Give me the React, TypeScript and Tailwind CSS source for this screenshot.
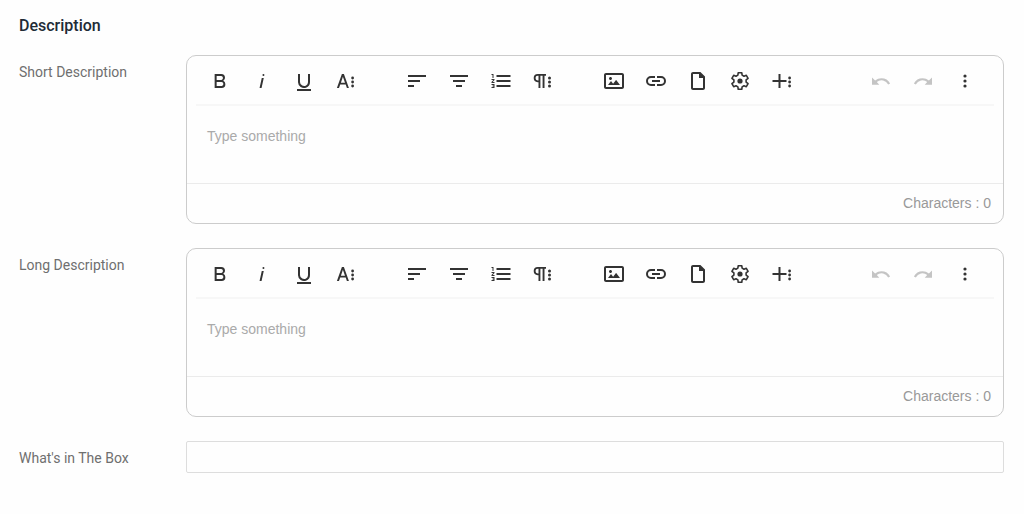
import React from "react";

type IconName =
  | "bold" | "italic" | "underline" | "moreText"
  | "alignLeft" | "alignCenter" | "orderedList" | "moreParagraph"
  | "image" | "link" | "file" | "settings" | "moreRich"
  | "undo" | "redo" | "moreMisc";

const gear = (() => {
  const points: string[] = [];
  const teeth = 6;
  for (let i = 0; i < teeth; i++) {
    const base = (i * 360) / teeth - 90;
    [[-20, 6.2], [-12, 8.5], [12, 8.5], [20, 6.2]].forEach(([da, r]) => {
      const a = ((base + da) * Math.PI) / 180;
      points.push(`${(12 + r * Math.cos(a)).toFixed(2)},${(12 + r * Math.sin(a)).toFixed(2)}`);
    });
  }
  return points.join(" ");
})();

const icons: Record<IconName, React.ReactNode> = {
  bold: <path d="M15.25,11.8h0A3.68,3.68,0,0,0,17,9a3.93,3.93,0,0,0-3.86-4H6.65V19h7a3.74,3.74,0,0,0,3.7-3.78V15.1A3.64,3.64,0,0,0,15.25,11.8ZM8.65,7h4.2a2.09,2.09,0,0,1,2,1.3,2.09,2.09,0,0,1-1.37,2.61,2.23,2.23,0,0,1-.63.09H8.65Zm4.6,10H8.65V13h4.6a2.09,2.09,0,0,1,2,1.3,2.09,2.09,0,0,1-1.37,2.61A2.23,2.23,0,0,1,13.25,17Z" />,
  italic: <path d="M11.76,9h2l-2.2,10h-2Zm1.68-4a1,1,0,1,0,1,1,1,1,0,0,0-1-1Z" />,
  underline: <path d="M19,20v2H5V20Zm-3-6.785a4,4,0,0,1-5.74,3.4A3.75,3.75,0,0,1,8,13.085V5.005H6v8.21a6,6,0,0,0,8,5.44,5.851,5.851,0,0,0,4-5.65v-8H16Z" />,
  moreText: (
    <>
      <path d="M12.9,19h2L9.9,5h-2L2.9,19H5l1.2-3.4h5.5ZM6.9,13.8,8.9,7.67l2.1,6.13Z" />
      <circle cx="18.6" cy="9" r="1.4" /><circle cx="18.6" cy="13" r="1.4" /><circle cx="18.6" cy="17" r="1.4" />
    </>
  ),
  alignLeft: <path d="M3,18h6v-2H3V18z M3,11v2h12v-2H3z M3,6v2h18V6H3z" />,
  alignCenter: <path d="M9,18h6v-2H9V18z M6,11v2h12v-2H6z M3,6v2h18V6H3z" />,
  orderedList: (
    <path d="M2.5,16h2v.5h-1v1h1V18h-2v1h3V15h-3Zm1-7h1V5h-2V6h1Zm-1,2H4.3L2.5,13.1V14h3V13H3.7l1.8-2.1V10h-3Zm5-5V8h14V6Zm0,12h14V16H7.5Zm0-5h14V11H7.5Z" />
  ),
  moreParagraph: (
    <>
      <path d="M6.8,5H15V6.8H13.5V19H11.6V6.8H9.4V19H7.5V13.2H6.8A4.1,4.1,0,0,1,6.8,5ZM7.5,6.8H6.8a2.3,2.3,0,0,0,0,4.6H7.5Z" />
      <circle cx="18.5" cy="9" r="1.5" /><circle cx="18.5" cy="13" r="1.5" /><circle cx="18.5" cy="17" r="1.5" />
    </>
  ),
  image: (
    <path d="M14.2,11l3.8,5H6l3-3.9l2.1,2.7L14,11H14.2z M8.5,11c0.8,0,1.5-0.7,1.5-1.5S9.3,8,8.5,8S7,8.7,7,9.5C7,10.3,7.7,11,8.5,11z M22,6v12c0,1.1-0.9,2-2,2H4c-1.1,0-2-0.9-2-2V6c0-1.1,0.9-2,2-2h16C21.1,4,22,4.9,22,6z M20,8.8V6H4v12h16V8.8z" />
  ),
  link: (
    <path d="M11,17H7A5,5,0,0,1,7,7h4V9H7a3,3,0,0,0,0,6h4ZM17,7H13V9h4a3,3,0,0,1,0,6H13v2h4A5,5,0,0,0,17,7Zm-1,4H8v2h8Z" />
  ),
  file: (
    <path d="M7,3C5.9,3,5,3.9,5,5v14c0,1.1,0.9,2,2,2h10c1.1,0,2-0.9,2-2V7.6L14.4,3H7z M17,19H7V5h6v4h4V19z" />
  ),
  settings: (
    <>
      <polygon points={gear} fill="none" stroke="currentColor" strokeWidth="1.6" strokeLinejoin="round" />
      <circle cx="12" cy="12" r="2.6" />
    </>
  ),
  moreRich: (
    <>
      <path d="M16.5,13H10.5v6h-2V13h-6V11h6V5h2v6h6Z" />
      <circle cx="19.6" cy="9" r="1.4" /><circle cx="19.6" cy="13" r="1.4" /><circle cx="19.6" cy="17" r="1.4" />
    </>
  ),
  undo: (
    <path d="M12.4,9.2a10,10,0,0,0-6.3,2.3L3,8.4V15.7h7.3L7.8,13.1a7.4,7.4,0,0,1,11.4,2.5l1.9-1A9.8,9.8,0,0,0,12.4,9.2Z" />
  ),
  redo: (
    <path d="M11.6,9.2a10,10,0,0,1,6.3,2.3L21,8.4V15.7H13.7L16.2,13.1a7.4,7.4,0,0,0-11.4,2.5l-1.9-1A9.8,9.8,0,0,1,11.6,9.2Z" />
  ),
  moreMisc: (
    <>
      <circle cx="12" cy="7" r="1.6" /><circle cx="12" cy="12" r="1.6" /><circle cx="12" cy="17" r="1.6" />
    </>
  ),
};

type Tool = { icon: IconName; label: string; disabled?: boolean };

const groups: Tool[][] = [
  [
    { icon: "bold", label: "Bold" },
    { icon: "italic", label: "Italic" },
    { icon: "underline", label: "Underline" },
    { icon: "moreText", label: "More Text" },
  ],
  [
    { icon: "alignLeft", label: "Align Left" },
    { icon: "alignCenter", label: "Align Center" },
    { icon: "orderedList", label: "Ordered List" },
    { icon: "moreParagraph", label: "More Paragraph" },
  ],
  [
    { icon: "image", label: "Insert Image" },
    { icon: "link", label: "Insert Link" },
    { icon: "file", label: "Upload File" },
    { icon: "settings", label: "Settings" },
    { icon: "moreRich", label: "More Rich" },
  ],
];

const history: Tool[] = [
  { icon: "undo", label: "Undo", disabled: true },
  { icon: "redo", label: "Redo", disabled: true },
  { icon: "moreMisc", label: "More Misc" },
];

function ToolGroup({ tools }: { tools: Tool[] }) {
  return (
    <div className="flex gap-1">
      {tools.map(({ icon, label, disabled }) => (
        <button
          key={icon}
          type="button"
          aria-label={label}
          disabled={disabled}
          className="flex h-10 w-[38px] items-center justify-center rounded text-[#333333] hover:bg-gray-100 disabled:text-[#c4c4c4]"
        >
          <svg viewBox="0 0 24 24" className="size-6" fill="currentColor" aria-hidden="true">
            {icons[icon]}
          </svg>
        </button>
      ))}
    </div>
  );
}

function Editor({ id }: { id: string }) {
  const [text, setText] = React.useState("");
  return (
    <div className="min-w-0 flex-1 rounded-[10px] border border-[#cccccc] font-['Liberation_Sans',Arial,sans-serif]">
      <div className="mx-[9px] flex items-center justify-between border-b-2 border-[#f7f7f7] pt-[5px] pr-[10px] pb-[3px] pl-[5px]">
        <div className="flex gap-[33px]">
          {groups.map((tools) => (
            <ToolGroup key={tools[0].icon} tools={tools} />
          ))}
        </div>
        <ToolGroup tools={history} />
      </div>
      <textarea
        id={id}
        value={text}
        onChange={(e) => setText(e.target.value)}
        placeholder="Type something"
        className="block h-[77px] w-full resize-none bg-transparent px-5 pt-5 text-sm leading-5 text-[#414141] outline-none placeholder:text-[#aaaaaa]"
      />
      <div className="border-t border-[#ebebeb] px-3 pt-[9px] pb-[10px] text-right text-sm leading-5 text-[#999999]">
        Characters : {text.length}
      </div>
    </div>
  );
}

function Field({ id, label, children }: { id: string; label: string; children: React.ReactNode }) {
  return (
    <div className="flex items-start">
      <label htmlFor={id} className="w-[167px] shrink-0 pt-[7px] text-sm leading-5 text-[#6f6f6f]">
        {label}
      </label>
      {children}
    </div>
  );
}

export default function App() {
  return (
    <main className="min-h-screen bg-[#fefefe] py-4 pr-5 pl-[19px] font-[Roboto,sans-serif]">
      <h2 className="text-base leading-5 font-medium text-[#212b36]">Description</h2>
      <form className="mt-[19px] flex flex-col gap-6">
        <Field id="short-description" label="Short Description">
          <Editor id="short-description" />
        </Field>
        <Field id="long-description" label="Long Description">
          <Editor id="long-description" />
        </Field>
        <Field id="box-contents" label="What's in The Box">
          <input
            id="box-contents"
            type="text"
            className="h-8 min-w-0 flex-1 rounded-xs border border-[#dddddd] bg-transparent px-3 text-sm outline-none"
          />
        </Field>
      </form>
    </main>
  );
}
